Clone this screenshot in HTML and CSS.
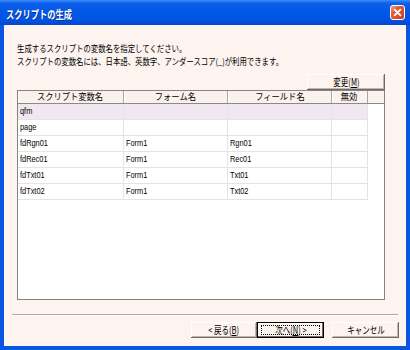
FILE: index.html
```html
<!DOCTYPE html>
<html lang="ja">
<head>
<meta charset="utf-8">
<title>スクリプトの生成</title>
<link rel="stylesheet" href="styles.css">
</head>
<body>
<div class="window">
  <div class="titlebar">
    <span class="title"><span class="sx">スクリプトの生成</span></span>
    <span class="close">
      <svg width="15" height="15" viewBox="0 0 15 15">
        <defs>
          <linearGradient id="cg" x1="0" y1="0" x2="1" y2="1">
            <stop offset="0" stop-color="#f3a585"/>
            <stop offset=".35" stop-color="#e45c37"/>
            <stop offset="1" stop-color="#c63c1c"/>
          </linearGradient>
        </defs>
        <rect x=".5" y=".5" width="14" height="14" rx="2.5" fill="url(#cg)" stroke="#fff"/>
        <path d="M4.6 4.6l5.8 5.8M10.4 4.6l-5.8 5.8" stroke="#fff" stroke-width="1.8" stroke-linecap="round"/>
      </svg>
    </span>
  </div>
  <div class="frame">
    <div class="content">
      <div class="intro">
        <p class="line"><span class="sxi">生成するスクリプトの変数名を指定してください。</span></p>
        <p class="line"><span class="sxi">スクリプトの変数名には、日本語、英数字、アンダースコア(_)が利用できます。</span></p>
      </div>
      <div class="toolrow">
        <button class="btn btn-change"><span class="sxc">変更(<u>M</u>)</span></button>
      </div>
      <div class="listview">
        <div class="lv-head">
          <span class="hc c1"><span class="sxh">スクリプト変数名</span></span>
          <span class="hc c2"><span class="sxh">フォーム名</span></span>
          <span class="hc c3"><span class="sxh">フィールド名</span></span>
          <span class="hc c4"><span class="sxh">無効</span></span>
        </div>
        <div class="row hl"><span><i>qfm</i></span><span></span><span></span><span></span></div>
        <div class="row"><span><i>page</i></span><span></span><span></span><span></span></div>
        <div class="row"><span><i>fdRgn01</i></span><span><i>Form1</i></span><span><i>Rgn01</i></span><span></span></div>
        <div class="row"><span><i>fdRec01</i></span><span><i>Form1</i></span><span><i>Rec01</i></span><span></span></div>
        <div class="row"><span><i>fdTxt01</i></span><span><i>Form1</i></span><span><i>Txt01</i></span><span></span></div>
        <div class="row"><span><i>fdTxt02</i></span><span><i>Form1</i></span><span><i>Txt02</i></span><span></span></div>
      </div>
    </div>
    <div class="sep"></div>
    <div class="buttons">
      <button class="btn btn-back"><span class="sxc">&lt; 戻る(<u>B</u>)</span></button>
      <button class="btn btn-next"><span class="sxc">次へ(<u>N</u>) &gt;</span></button>
      <button class="btn btn-cancel"><span class="sxc">キャンセル</span></button>
    </div>
  </div>
</div>
</body>
</html>
```
FILE: styles.css
```css
* { box-sizing: border-box; }
html, body { margin: 0; padding: 0; }
body {
  width: 410px;
  height: 350px;
  overflow: hidden;
  background: #0a55e2;
  font-family: "Noto Sans CJK JP", sans-serif;
  color: #000;
}
.window {
  width: 410px;
  height: 350px;
  display: flex;
  flex-direction: column;
}
.titlebar {
  flex: none;
  height: 25px;
  display: flex;
  align-items: center;
  justify-content: space-between;
  padding: 3px 5px 0 6px;
  background: linear-gradient(#3f8ff9 0, #0d60ec 3px, #0357e6 12px, #0154e3 20px, #0344cc 25px);
}
.title {
  color: #fff;
  font-weight: 700;
  font-size: 11px;
  line-height: 12px;
  text-shadow: 1px 1px 0 #0b2c96;
}
.sx {
  display: inline-block;
  white-space: nowrap;
  transform: scaleX(.75);
  transform-origin: 0 50%;
}
.sxi {
  display: inline-block;
  white-space: nowrap;
  transform: scaleX(.82);
  transform-origin: 0 50%;
}
.sxc {
  display: inline-block;
  white-space: nowrap;
  transform: scaleX(.75);
  transform-origin: 50% 50%;
}
.sxh {
  display: inline-block;
  white-space: nowrap;
  transform: scaleX(.92);
  transform-origin: 50% 50%;
}
.close {
  display: block;
  width: 15px;
  height: 15px;
  margin-top: -4px;
}
.close svg { display: block; }
.frame {
  flex: 1;
  display: flex;
  flex-direction: column;
  border: 4px solid #0a55e2;
  border-top: 0;
  background: #fdf3ef;
}
.content {
  padding: 17px 21px 0 13px;
}
.intro {
  height: 26px;
  font-size: 9px;
  line-height: 13px;
}
.line {
  margin: 0;
  height: 13px;
}
.toolrow {
  display: flex;
  justify-content: flex-end;
  margin-top: 6px;
}
.btn {
  position: relative;
  display: flex;
  align-items: center;
  justify-content: center;
  height: 16px;
  padding: 0;
  border: 0;
  background: #fdf3ef;
  font-family: "Noto Sans CJK JP", sans-serif;
  font-size: 10px;
  font-weight: 400;
  line-height: 12px;
  color: #000;
  box-shadow: inset -1px -1px #6f6b67, inset 1px 1px #fff, inset -2px -2px #bdb7b1;
}
.btn u { text-decoration-thickness: 1px; text-underline-offset: 1px; }
.btn-change { width: 78px; }
.listview {
  height: 210px;
  border: 1px solid #86827e;
  background: #fff;
}
.lv-head {
  display: flex;
  height: 13px;
  border-bottom: 1px solid #8d8985;
  background: #fbf2ee;
}
.hc {
  display: block;
  height: 12px;
  border-right: 1px solid #aaa6a1;
  box-shadow: inset 1px 0 #fff;
  font-size: 9px;
  line-height: 12px;
  text-align: center;
  overflow: hidden;
}
.c1 { width: 106px; }
.c2 { width: 104px; }
.c3 { width: 104px; }
.c4 { width: 36px; }
.row {
  display: grid;
  grid-template-columns: 106px 104px 104px 36px;
  width: 350px;
  height: 16px;
}
.row.hl { background: #f1e7f1; }
.row > span {
  border-right: 1px solid #e7e2e7;
  border-bottom: 1px solid #e7e2e7;
  padding-left: 2px;
  font-family: "Liberation Sans", sans-serif;
  font-size: 9px;
  line-height: 15px;
  white-space: nowrap;
}
.row i {
  font-style: normal;
  display: inline-block;
  transform: scaleX(.82);
  transform-origin: 0 50%;
}
.sep {
  margin: 14px 8px 0;
  height: 2px;
  border-top: 1px solid #ada9a4;
  border-bottom: 1px solid #fff;
}
.buttons {
  display: flex;
  justify-content: flex-end;
  margin-top: 6px;
  padding-right: 7px;
}
.btn-back { width: 66px; }
.btn-next {
  width: 67px;
  box-shadow: inset 0 0 0 1px #000, inset -2px -2px #6f6b67, inset 2px 2px #fff;
}
.btn-next::before {
  content: "";
  position: absolute;
  left: 4px;
  right: 4px;
  top: 3px;
  bottom: 3px;
  border: 1px dotted #000;
}
.btn-cancel { width: 67px; margin-left: 8px; }
```
